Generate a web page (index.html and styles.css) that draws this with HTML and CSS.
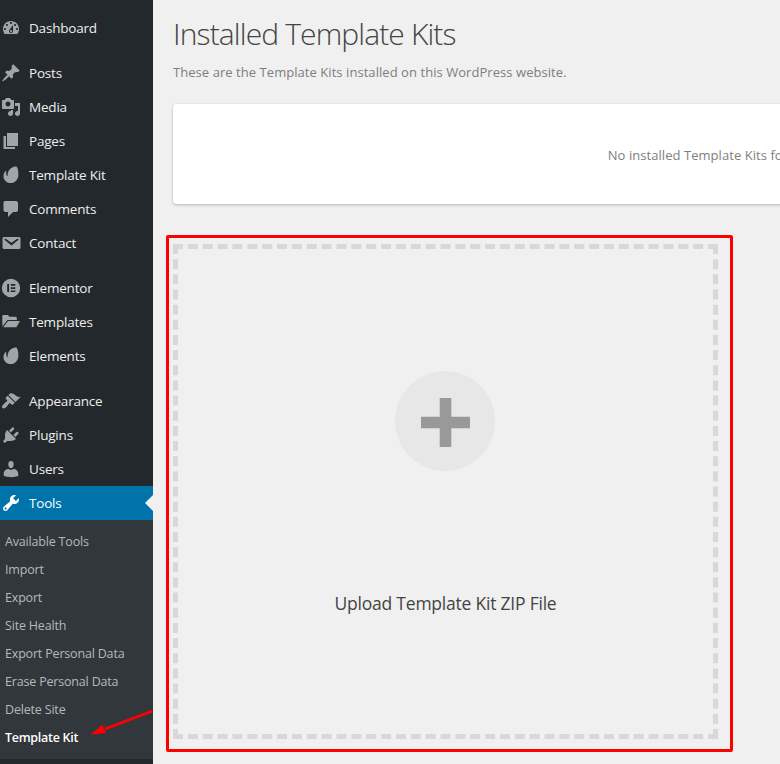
FILE: index.html
```html
<!DOCTYPE html>
<html lang="en">
<head>
<meta charset="utf-8">
<title>Template Kits</title>
<link rel="stylesheet" href="styles.css">
</head>
<body>
<svg width="0" height="0" class="defs">
  <symbol id="leaf" viewBox="0 0 20 20"><path d="M15.600 1.700c-.8-.5-3.500-.1-5.700 1.600C7 5.500 6.500 8.500 6.600 10.900c0 .3-.3.4-.5.2C5.300 10 5 8.300 5.300 6.200c.1-.4-.3-.5-.6-.2C3.300 7.300 2.500 9.200 2.500 11c0 4.200 3.200 7.100 7.100 7.100 4.700 0 7.300-3.500 7.700-7.300.4-3.800-.5-8.300-1.700-9.100z"/></symbol>
</svg>
<div class="layout">
  <nav class="sidebar">
    <ul class="menu">
      <li><svg viewBox="0 0 20 20"><path fill-rule="evenodd" d="M3.760 16h12.480c1.100-1.370 1.760-3.110 1.760-5 0-4.420-3.580-8-8-8s-8 3.580-8 8c0 1.890.66 3.630 1.760 5zM10 4c.55 0 1 .45 1 1s-.45 1-1 1-1-.45-1-1 .45-1 1-1zM6 6c.55 0 1 .45 1 1s-.45 1-1 1-1-.45-1-1 .45-1 1-1zm8 0c.55 0 1 .45 1 1s-.45 1-1 1-1-.45-1-1 .45-1 1-1zm-5.370 5.550L12 7v6c0 1.100-.9 2-2 2s-2-.9-2-2c0-.57.24-1.080.63-1.450zM4 10c.55 0 1 .45 1 1s-.45 1-1 1-1-.45-1-1 .45-1 1-1zm12 0c.55 0 1 .45 1 1s-.45 1-1 1-1-.45-1-1 .45-1 1-1zm-5 3c0-.55-.45-1-1-1s-1 .45-1 1 .45 1 1 1 1-.45 1-1z"/></svg><span>Dashboard</span></li>
    </ul>
    <ul class="menu">
      <li><svg viewBox="0 0 20 20"><path d="M10.440 3.020l1.820-1.820 6.360 6.350-1.830 1.820c-1.050-.68-2.480-.57-3.410.36l-.75.75c-.92.93-1.040 2.350-.35 3.410l-1.830 1.820-2.410-2.410-2.800 2.790c-.42.42-3.380 2.710-3.800 2.290s1.860-3.390 2.280-3.810l2.790-2.790L4.100 9.360l1.830-1.820c1.050.69 2.480.57 3.400-.36l.75-.75c.93-.92 1.050-2.350.36-3.410z"/></svg><span>Posts</span></li>
      <li><svg viewBox="0 0 20 20"><path fill-rule="evenodd" d="M13 11V4c0-.55-.45-1-1-1h-1.670L9 1H5L3.670 3H2c-.55 0-1 .45-1 1v7c0 .55.45 1 1 1h10c.55 0 1-.45 1-1zM7 4.500c1.380 0 2.500 1.120 2.500 2.500S8.380 9.500 7 9.500 4.500 8.380 4.500 7 5.620 4.500 7 4.500zM14 6h5v10.500c0 1.380-1.120 2.500-2.500 2.500S14 17.880 14 16.500s1.120-2.500 2.500-2.500c.17 0 .34.02.5.05V9h-3V6zm-4 8.050V13h2v3.500c0 1.380-1.120 2.500-2.500 2.500S7 17.880 7 16.500 8.120 14 9.500 14c.17 0 .34.02.5.05z"/></svg><span>Media</span></li>
      <li><svg viewBox="0 0 20 20"><path d="M6 15V2h11v13H6zm-1 1h9v2H2.500V5H5v11z"/></svg><span>Pages</span></li>
      <li><svg><use href="#leaf"/></svg><span>Template Kit</span></li>
      <li><svg viewBox="0 0 20 20"><path d="M4 2h11c1.100 0 2 .9 2 2v7c0 1.100-.9 2-2 2h-3l-5 5v-5H4.500c-1.100 0-2-.9-2-2V4c0-1.100.4-2 1.500-2z"/></svg><span>Comments</span></li>
      <li><svg viewBox="0 0 20 20"><path fill-rule="evenodd" d="M3.370 4h14.250C18.870 4 19.500 4.590 19.500 5.790v8.420c0 1.190-.63 1.790-1.880 1.790H3.370c-1.250 0-1.880-.6-1.880-1.790V5.790C1.500 4.590 2.120 4 3.370 4zm7.120 8.600l6.740-5.530c.24-.2.43-.66.13-1.070-.29-.41-.82-.42-1.170-.17l-5.700 3.860L4.800 5.830c-.35-.25-.88-.24-1.170.17-.3.41-.11.87.13 1.070z"/></svg><span>Contact</span></li>
    </ul>
    <ul class="menu">
      <li><svg viewBox="0 0 20 20"><path fill-rule="evenodd" d="M10 .8a9.200 9.200 0 1 0 0 18.400A9.200 9.200 0 0 0 10 .8zM6.200 6h1.900v8H6.200zM9.800 6h4.500v1.700H9.800zM9.800 9.200h4.500v1.700H9.800zM9.800 12.400h4.500V14H9.800z"/></svg><span>Elementor</span></li>
      <li><svg viewBox="0 0 20 20"><path d="M1.300 14.500V4.300c0-.8.5-1.300 1.300-1.300h4.200l1.700 1.700h6c.8 0 1.300.5 1.300 1.200V8H6.500L1.300 14.500zM7 9h11.900l-3.500 6.300H2.200z"/></svg><span>Templates</span></li>
      <li><svg><use href="#leaf"/></svg><span>Elements</span></li>
    </ul>
    <ul class="menu">
      <li><svg viewBox="0 0 20 20"><path d="M14.480 11.060L7.410 3.990l1.500-1.500c.5-.56 2.300-.47 3.510.32 1.210.8 1.430 1.280 2.910 2.100 1.180.64 2.450 1.260 4.450.85zm-.71.71L6.700 4.700 4.930 6.470c-.39.39-.39 1.020 0 1.410l1.060 1.060c.39.39.39 1.030 0 1.420-.6.6-1.430 1.110-2.210 1.690-.35.26-.7.53-1.010.84C1.430 14.230.4 16.080 1.400 17.070c.99 1 2.840-.03 4.180-1.360.31-.31.58-.66.85-1.020.57-.78 1.080-1.610 1.690-2.210.39-.39 1.020-.39 1.410 0l1.060 1.060c.39.39 1.020.39 1.410 0z"/></svg><span>Appearance</span></li>
      <li><svg viewBox="0 0 20 20"><path d="M13.110 4.360L9.870 7.600 8 5.730l3.240-3.240c.35-.34 1.050-.2 1.560.32.52.51.66 1.210.31 1.550zm-8 1.770l.91-1.120 9.010 9.010-1.190.84c-.71.71-2.630 1.160-3.820 1.160H6.140L4.900 17.260c-.59.59-1.540.59-2.120 0-.59-.58-.59-1.530 0-2.120l1.240-1.240v-3.880c0-1.130.4-3.190 1.090-3.890zm7.260 3.970l3.240-3.240c.34-.35 1.040-.21 1.550.31.52.51.66 1.210.31 1.550l-3.240 3.250z"/></svg><span>Plugins</span></li>
      <li><svg viewBox="0 0 20 20"><path d="M10 9.250c-2.270 0-2.730-3.440-2.730-3.440C7 4.020 7.820 2 9.970 2c2.160 0 2.980 2.020 2.710 3.810 0 0-.41 3.440-2.680 3.440zM12.720 10c2.390 0 4.520 2.330 4.520 4.530v2.490s-3.650 1.130-7.240 1.130c-3.650 0-7.240-1.130-7.240-1.130v-2.490c0-2.250 1.940-4.480 4.470-4.480L10 11z"/></svg><span>Users</span></li>
      <li class="current"><svg viewBox="0 0 20 20"><path fill-rule="evenodd" d="M16.680 9.770c-1.340 1.340-3.300 1.670-4.950.99l-5.410 6.520c-.99.99-2.590.99-3.580 0s-.99-2.590 0-3.570l6.520-5.420c-.68-1.650-.35-3.610.99-4.950 1.280-1.280 3.120-1.620 4.720-1.060l-2.890 2.890 2.820 2.820 2.860-2.870c.53 1.580.18 3.390-1.080 4.650zM3.810 16.210c.4.39 1.040.39 1.430 0 .4-.4.4-1.040 0-1.430-.39-.4-1.030-.4-1.430 0-.39.39-.39 1.030 0 1.430z"/></svg><span>Tools</span></li>
    </ul>
    <ul class="submenu">
      <li><span>Available Tools</span></li>
      <li><span>Import</span></li>
      <li><span>Export</span></li>
      <li><span>Site Health</span></li>
      <li><span>Export Personal Data</span></li>
      <li><span>Erase Personal Data</span></li>
      <li><span>Delete Site</span></li>
      <li class="active"><span>Template Kit</span></li>
    </ul>
    <svg class="arrow" viewBox="0 0 64 28"><path d="M61.500 2L14 20" stroke="#f00" stroke-width="2.800"/><path d="M-.5 25.500L11.500 15.700 15 24z" fill="#f00"/></svg>
  </nav>
  <main class="content">
    <h1><span>Installed Template Kits</span></h1>
    <p class="intro"><span>These are the Template Kits installed on this WordPress website.</span></p>
    <section class="notice"><span>No installed Template Kits found.</span></section>
    <div class="highlight">
      <div class="dropzone">
        <div class="circle"><svg viewBox="0 0 49 49"><path d="M18.700 0h11.600v18.700H49v11.600H30.300V49H18.700V30.300H0V18.700h18.700z"/></svg></div>
        <div class="upload"><span>Upload Template Kit ZIP File</span></div>
      </div>
    </div>
  </main>
</div>
</body>
</html>
```
FILE: styles.css
```css
* { box-sizing: border-box; }
body {
  margin: 0;
  height: 764px;
  overflow: hidden;
  background: #f0f0f0;
  font-family: "Open Sans", "Noto Sans", sans-serif;
}
.defs { display: block; width: 0; height: 0; position: absolute; }
.layout { display: flex; height: 764px; }
.sidebar {
  position: relative;
  flex: 0 0 153px;
  padding-top: 11px;
  background: #23282d;
}
ul { margin: 0; padding: 0; list-style: none; }
.menu + .menu { margin-top: 11px; }
.menu li {
  position: relative;
  display: flex;
  align-items: center;
  gap: 8px;
  height: 34px;
  padding-left: 1px;
  color: #eee;
  font-size: 13.500px;
  letter-spacing: -0.200px;
  white-space: nowrap;
}
.menu svg { width: 20px; height: 20px; flex: none; fill: #a0a5aa; }
.menu .current { background: #0073aa; color: #fff; }
.menu .current svg { fill: #fff; }
.current::after {
  content: "";
  position: absolute;
  right: 0;
  top: 9px;
  border: 8px solid transparent;
  border-left-width: 0;
  border-right-color: #f0f0f0;
}
.submenu { height: 239px; padding: 8px 0 0 5px; background: #32373c; }
.submenu li {
  height: 28px;
  line-height: 28px;
  color: #b4b9be;
  font-size: 12.500px;
  letter-spacing: -0.180px;
  white-space: nowrap;
}
.submenu .active { color: #fff; font-weight: 600; letter-spacing: -0.280px; }
.arrow { position: absolute; left: 91px; top: 709px; width: 64px; height: 28px; fill: none; }
.content { flex: 1; min-width: 0; padding: 14px 0 0 20px; overflow: hidden; }
h1 {
  margin: 0;
  height: 40px;
  line-height: 40px;
  color: #444;
  font-size: 30px;
  font-weight: 300;
  letter-spacing: -0.870px;
  white-space: nowrap;
}
.intro {
  margin: 8px 0 0;
  height: 20px;
  line-height: 20px;
  color: #7e7e7e;
  font-size: 13px;
  letter-spacing: 0.055px;
  white-space: nowrap;
}
.notice {
  display: flex;
  align-items: center;
  justify-content: center;
  width: 1072px;
  height: 100px;
  margin-top: 22px;
  padding-top: 2px;
  border-radius: 4px;
  background: #fff;
  box-shadow: 0 1px 3px rgba(0, 0, 0, 0.25);
  color: #7e7e7e;
  font-size: 13px;
  letter-spacing: 0.055px;
  white-space: nowrap;
}
.highlight {
  width: 567px;
  height: 517px;
  margin: 31px 0 0 -7px;
  padding: 6px 0 0 4px;
  border: 3px solid #f00;
  border-radius: 2px;
}
.dropzone {
  display: flex;
  flex-direction: column;
  align-items: center;
  width: 545px;
  height: 495px;
  padding: 122px 1px 0 0;
  border: 5px dashed #d8d8d8;
}
.circle {
  display: flex;
  justify-content: center;
  width: 100px;
  height: 100px;
  padding: 27px 0 0 1px;
  border-radius: 50%;
  background: #e7e7e7;
}
.circle svg { width: 49px; height: 49px; fill: #999; }
.upload {
  margin-top: 120px;
  padding-left: 1px;
  line-height: 24px;
  color: #444;
  font-size: 17.500px;
  letter-spacing: -0.220px;
  white-space: nowrap;
}
```
